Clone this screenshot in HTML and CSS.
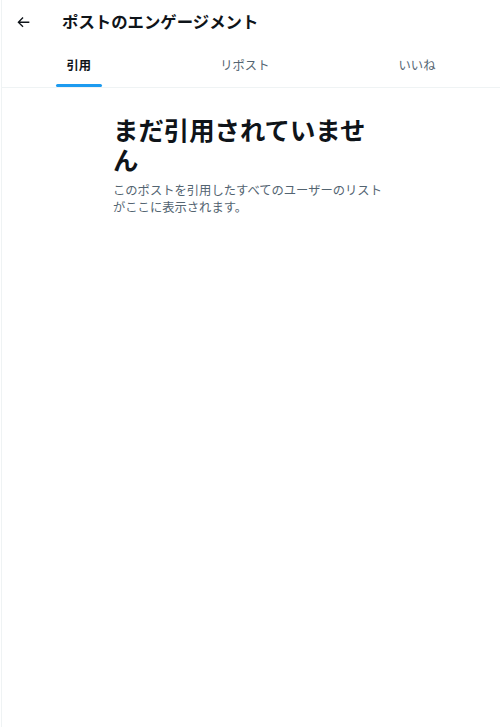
FILE: index.html
```html
<!DOCTYPE html>
<html lang="ja">
<head>
<meta charset="utf-8">
<link rel="stylesheet" href="styles.css">
</head>
<body>
<div class="page">
  <header class="header">
    <div class="back">
      <svg viewBox="0 0 24 24" class="back-icon"><path d="M7.414 13l5.043 5.04-1.414 1.42L3.586 12l7.457-7.46 1.414 1.42L7.414 11H21v2H7.414z"/></svg>
    </div>
    <h1 class="title">ポストのエンゲージメント</h1>
  </header>
  <nav class="tabs">
    <div class="tab active"><span class="tab-label">引用</span><span class="indicator"></span></div>
    <div class="tab"><span class="tab-label">リポスト</span></div>
    <div class="tab"><span class="tab-label">いいね</span></div>
  </nav>
  <section class="empty">
    <h2 class="empty-title">まだ引用されていません</h2>
    <p class="empty-text">このポストを引用したすべてのユーザーのリストがここに表示されます。</p>
  </section>
</div>
</body>
</html>
```
FILE: styles.css
```css
html, body {
  margin: 0;
  padding: 0;
  background: #ffffff;
}
body {
  font-family: "Noto Sans CJK JP", "Noto Sans", sans-serif;
  color: #0f1419;
}
.page {
  margin-left: 1px;
  border-left: 1px solid #eff3f4;
  min-height: 727px;
  box-sizing: border-box;
}
.header {
  height: 43.5px;
  display: flex;
  align-items: center;
}
.back {
  width: 47px;
  display: flex;
  align-items: center;
  padding-left: 13px;
  box-sizing: border-box;
}
.back-icon {
  width: 16.4px;
  height: 16.4px;
  fill: #0f1419;
}
.title {
  margin: 0;
  font-size: 16.4px;
  font-weight: 700;
  line-height: 20px;
  padding-left: 13px;
  padding-bottom: 1px;
}
.tabs {
  display: flex;
  height: 43.5px;
  border-bottom: 1px solid #eff3f4;
}
.tab {
  flex: 1 1 auto;
  padding: 0 13px;
  position: relative;
  display: flex;
  align-items: center;
  justify-content: center;
  font-size: 12.3px;
  font-weight: 400;
  color: #536471;
}
.tab.active {
  color: #0f1419;
  font-weight: 700;
}
.indicator {
  position: absolute;
  bottom: 0;
  left: 50%;
  width: 46px;
  margin-left: -23px;
  height: 3.3px;
  border-radius: 9999px;
  background: #1d9bf0;
}
.empty {
  width: 275.5px;
  margin: 27px 0 0 111px;
}
.empty-title {
  margin: 0;
  font-size: 25.4px;
  line-height: 29.5px;
  font-weight: 700;
  color: #0f1419;
}
.empty-text {
  margin: 8px 0 0;
  font-size: 12.3px;
  line-height: 16.6px;
  color: #536471;
}
```
